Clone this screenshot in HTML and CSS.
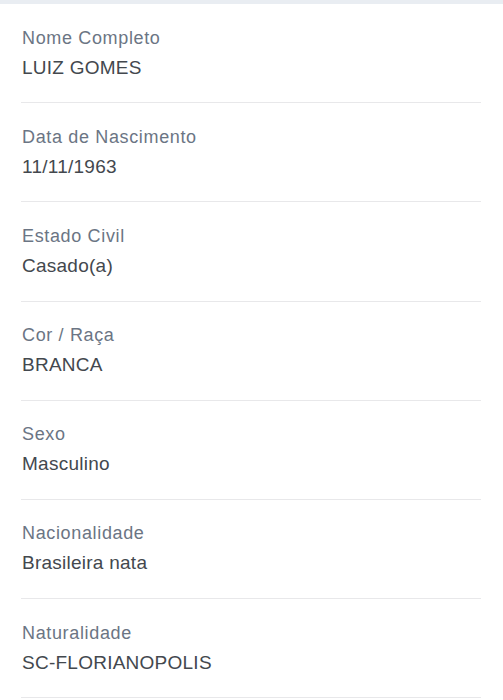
FILE: index.html
```html
<!DOCTYPE html>
<html lang="pt-BR">
<head>
<meta charset="utf-8">
<link rel="stylesheet" href="styles.css">
</head>
<body>
<div class="topbar"></div>
<div class="list">
  <div class="item"><div class="label">Nome Completo</div><div class="value">LUIZ GOMES</div></div>
  <div class="item"><div class="label">Data de Nascimento</div><div class="value">11/11/1963</div></div>
  <div class="item"><div class="label">Estado Civil</div><div class="value">Casado(a)</div></div>
  <div class="item"><div class="label">Cor / Raça</div><div class="value">BRANCA</div></div>
  <div class="item"><div class="label">Sexo</div><div class="value">Masculino</div></div>
  <div class="item"><div class="label">Nacionalidade</div><div class="value">Brasileira nata</div></div>
  <div class="item"><div class="label">Naturalidade</div><div class="value">SC-FLORIANOPOLIS</div></div>
</div>
</body>
</html>
```
FILE: styles.css
```css
html, body { margin: 0; padding: 0; background: #ffffff; }
body { font-family: "Liberation Sans", Arial, sans-serif; }
.topbar { height: 4px; background: #e9edf2; }
.list { padding: 0 22px 0 21px; }
.item {
  padding: 18.5px 0 19.7px 1px;
  border-bottom: 1px solid #e8e8ea;
}
.label {
  font-size: 18px;
  line-height: 30px;
  color: #6b7584;
  letter-spacing: 0.65px;
}
.value {
  font-size: 19px;
  line-height: 30px;
  color: #43484e;
  letter-spacing: 0.25px;
}
```
